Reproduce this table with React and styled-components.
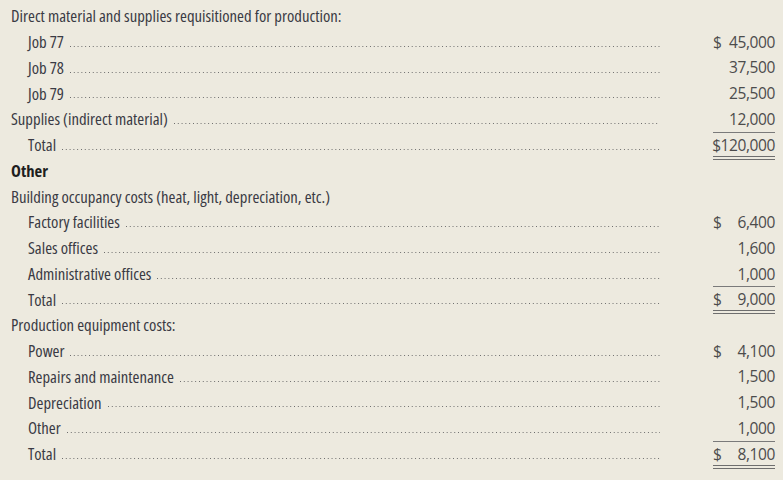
import styled, { createGlobalStyle } from "styled-components";

const GlobalStyle = createGlobalStyle`
  html, body {
    margin: 0;
    padding: 0;
    background: #edeadf;
  }
`;

const Sheet = styled.div`
  width: 783px;
  height: 480px;
  box-sizing: border-box;
  padding: 3px 8px 0 11px;
  background: #edeadf;
  font-family: "Open Sans", "Liberation Sans", sans-serif;
  font-stretch: 75%;
  font-size: 16.7px;
  color: #3a3a44;
  overflow: hidden;
`;

const Row = styled.div`
  display: grid;
  grid-template-columns: 1fr 62px;
  column-gap: 53px;
  height: 25.75px;
  align-items: center;
`;

const LabelCell = styled.div`
  display: flex;
  align-items: center;
  padding-left: ${(p) => (p.$indent ? "17px" : "0")};
  height: 100%;
`;

const Label = styled.span`
  white-space: nowrap;
  font-weight: ${(p) => (p.$bold ? 700 : 400)};
  color: ${(p) => (p.$bold ? "#1e1e1e" : "#3a3a44")};
`;

const Leader = styled.span`
  flex: 1;
  align-self: stretch;
  margin-left: 6px;
  background-image: linear-gradient(to right, #6a6a6a 1.2px, transparent 1.2px);
  background-size: 3.8px 1px;
  background-repeat: repeat-x;
  background-position: left 17px;
`;

const Amount = styled.div`
  height: 100%;
  box-sizing: border-box;
  display: flex;
  align-items: center;
  justify-content: ${(p) => (p.$sign ? "space-between" : "flex-end")};
  color: #4c4c4c;
  font-size: 15.5px;
  font-stretch: 100%;
  letter-spacing: -0.4px;
  border-bottom: ${(p) =>
    p.$rule === "single"
      ? "1.5px solid #7a7a7a"
      : p.$rule === "double"
      ? "4px double #6e6e6e"
      : "none"};
  margin-bottom: ${(p) => (p.$rule === "double" ? "-4px" : p.$rule === "single" ? "-1.5px" : "0")};
`;

const rows = [
  { label: "Direct material and supplies requisitioned for production:" },
  { label: "Job 77", indent: true, sign: "$", value: "45,000" },
  { label: "Job 78", indent: true, value: "37,500" },
  { label: "Job 79", indent: true, value: "25,500" },
  { label: "Supplies (indirect material)", value: "12,000", rule: "single" },
  { label: "Total", indent: true, value: "$120,000", rule: "double" },
  { label: "Other", bold: true },
  { label: "Building occupancy costs (heat, light, depreciation, etc.)" },
  { label: "Factory facilities", indent: true, sign: "$", value: "6,400" },
  { label: "Sales offices", indent: true, value: "1,600" },
  { label: "Administrative offices", indent: true, value: "1,000", rule: "single" },
  { label: "Total", indent: true, sign: "$", value: "9,000", rule: "double" },
  { label: "Production equipment costs:" },
  { label: "Power", indent: true, sign: "$", value: "4,100" },
  { label: "Repairs and maintenance", indent: true, value: "1,500" },
  { label: "Depreciation", indent: true, value: "1,500" },
  { label: "Other", indent: true, value: "1,000", rule: "single" },
  { label: "Total", indent: true, sign: "$", value: "8,100", rule: "double" },
];

export default function App() {
  return (
    <>
      <GlobalStyle />
      <Sheet>
        {rows.map((r, i) => {
          const hasValue = r.value !== undefined;
          return (
            <Row key={i}>
              <LabelCell $indent={r.indent}>
                <Label $bold={r.bold}>{r.label}</Label>
                {hasValue && <Leader />}
              </LabelCell>
              {hasValue ? (
                <Amount $sign={!!r.sign} $rule={r.rule}>
                  {r.sign && <span>{r.sign}</span>}
                  <span>{r.value}</span>
                </Amount>
              ) : (
                <span />
              )}
            </Row>
          );
        })}
      </Sheet>
    </>
  );
}
